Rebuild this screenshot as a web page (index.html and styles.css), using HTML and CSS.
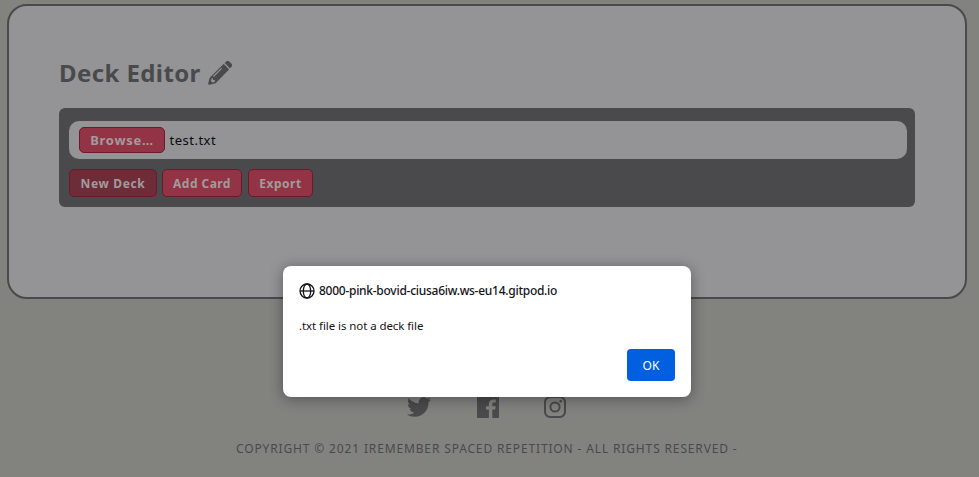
FILE: index.html
```html
<!DOCTYPE html>
<html lang="en">
<head>
<meta charset="utf-8">
<title>Deck Editor</title>
<link rel="stylesheet" href="styles.css">
</head>
<body>
<main class="card">
  <h1 class="title"><span class="title-text">Deck Editor</span>
    <svg class="pencil" viewBox="0 0 24 24"><path fill-rule="evenodd" d="M17.300 1.400 18 .7a2.400 2.400 0 0 1 3.400 0l1.900 1.900a2.400 2.400 0 0 1 0 3.400l-.9.900a.6.600 0 0 1-.8 0l-4.300-4.300a.6.600 0 0 1 0-1.200zM15.300 3.200a.6.600 0 0 1 .8 0l4.700 4.700a.6.600 0 0 1 0 .8L7.700 22.200 1.300 23.700A1 1 0 0 1 .2 22.600L1.700 16.800zM5.800 15.900l8.200-8.200-.8-.8L5 15.100zM3.600 17.500l-.7 2.600 1.500 1.400 2.400-.6v-1.900H5v-1.800z"/></svg>
  </h1>
  <section class="panel">
    <div class="file"><button class="btn browse"><span>Browse…</span></button><span class="filename">test.txt</span></div>
    <div class="actions">
      <button class="btn new active"><span>New Deck</span></button>
      <button class="btn add"><span>Add Card</span></button>
      <button class="btn export"><span>Export</span></button>
    </div>
  </section>
</main>
<footer class="footer">
  <div class="social">
    <svg class="twitter" viewBox="0 0 512 512"><path d="M459.37 151.716c.325 4.548.325 9.097.325 13.645 0 138.72-105.583 298.558-298.558 298.558-59.452 0-114.680-17.219-161.137-47.106 8.447.974 16.568 1.299 25.340 1.299 49.055 0 94.213-16.568 130.274-44.832-46.132-.975-84.792-31.188-98.112-72.772 6.498.974 12.995 1.624 19.818 1.624 9.421 0 18.843-1.300 27.614-3.573-48.081-9.747-84.143-51.980-84.143-102.985v-1.299c13.969 7.797 30.214 12.670 47.431 13.319-28.264-18.843-46.781-51.005-46.781-87.391 0-19.492 5.197-37.360 14.294-52.954 51.655 63.675 129.300 105.258 216.365 109.807-1.624-7.797-2.599-15.918-2.599-24.040 0-57.828 46.782-104.934 104.934-104.934 30.213 0 57.502 12.670 76.670 33.137 23.715-4.548 46.456-13.320 66.599-25.340-7.798 24.366-24.366 44.833-46.132 57.827 21.117-2.273 41.584-8.122 60.426-16.243-14.292 20.791-32.161 39.308-52.628 54.253z"/></svg>
    <svg class="facebook" viewBox="0 0 22 22"><path fill-rule="evenodd" d="M1 0h20a1 1 0 0 1 1 1v20a1 1 0 0 1-1 1h-5.700v-8.400h2.900l.5-3.400h-3.400V8.100c0-1 .4-1.600 1.800-1.600h1.700V3.600a18 18 0 0 0-2.600-.2c-2.700 0-4.300 1.600-4.300 4.300v2.500H9v3.400h2.900V22H1a1 1 0 0 1-1-1V1a1 1 0 0 1 1-1z"/></svg>
    <svg class="instagram" viewBox="0 0 22 22"><rect x="1" y="1" width="20" height="20" rx="5.200"/><circle cx="11" cy="11" r="4.600"/><circle class="dot" cx="16.700" cy="5.300" r="1.300"/></svg>
  </div>
  <p class="copyright"><span>COPYRIGHT © 2021 IREMEMBER SPACED REPETITION - ALL RIGHTS RESERVED -</span></p>
</footer>
<div class="dialog" role="alertdialog">
  <div class="origin">
    <svg class="globe" viewBox="0 0 16 16"><circle cx="8" cy="8" r="7"/><ellipse cx="8" cy="8" rx="3.700" ry="7"/><path d="M1 8h14"/></svg>
    <span class="host">8000-pink-bovid-ciusa6iw.ws-eu14.gitpod.io</span>
  </div>
  <p class="message"><span>.txt file is not a deck file</span></p>
  <button class="ok">OK</button>
</div>
</body>
</html>
```
FILE: styles.css
```css
* { box-sizing: border-box; }
body {
  margin: 0;
  padding: 4px 12px 0 7px;
  height: 477px;
  overflow: hidden;
  background: #82827f;
  color: #4a4a4c;
  font-family: "Noto Sans", "Open Sans", sans-serif;
}
button { font-family: inherit; }
.card {
  height: 295px;
  padding: 50px 50px 0;
  border: 2px solid #4a4a4c;
  border-radius: 20px;
  background: #949496;
}
.title {
  display: flex;
  align-items: center;
  gap: 8px;
  height: 34px;
  margin: 0 0 18px;
  font-size: 24px;
  line-height: 34px;
  white-space: nowrap;
}
.title-text { width: 141px; letter-spacing: 0.4px; }
.pencil { width: 24px; height: 24px; fill: #4a4a4c; }
.panel {
  height: 99px;
  padding: 13px 8px 0 10px;
  border-radius: 6px;
  background: #4a4a4c;
}
.file {
  display: flex;
  align-items: center;
  height: 38px;
  padding: 0 10px;
  border-radius: 10px;
  background: #949496;
}
.filename {
  margin-left: 4.500px;
  color: #0c0c0d;
  font-size: 13px;
  letter-spacing: 0.5px;
}
.btn {
  display: flex;
  align-items: center;
  justify-content: center;
  height: 28px;
  padding: 0;
  border: 1px solid #6c1a2b;
  border-radius: 5px;
  background: #933446;
  color: #a29b9d;
  font-size: 12px;
  font-weight: 700;
  letter-spacing: 0.65px;
  white-space: nowrap;
}
.browse { width: 86px; height: 26px; font-size: 13px; letter-spacing: 0.7px; }
.actions { display: flex; margin-top: 10px; }
.new { width: 88px; }
.add { width: 80px; margin-left: 5px; letter-spacing: 0.45px; }
.export { width: 65px; margin-left: 6px; letter-spacing: 0.5px; }
.active { background: #6e2b38; }
.footer { padding-top: 97px; }
.social {
  display: flex;
  height: 24px;
  padding-left: 400px;
  align-items: flex-start;
}
.social svg { fill: #4a4a4c; }
.twitter { width: 24px; height: 24px; margin-top: -1px; }
.facebook { width: 22px; height: 22px; margin-left: 46px; }
.instagram { width: 22px; height: 22px; margin-left: 45px; }
.social .instagram { fill: none; stroke: #4a4a4c; stroke-width: 2; }
.social .dot { fill: #4a4a4c; stroke: none; }
.copyright {
  margin: 20px 0 0 229px;
  font-size: 12px;
  line-height: 18px;
  letter-spacing: 0.855px;
  white-space: nowrap;
}
.dialog {
  position: absolute;
  left: 283px;
  top: 266px;
  width: 408px;
  height: 131px;
  padding: 16px;
  border-radius: 8px;
  background: #fff;
  box-shadow: 0 2px 14px rgba(12, 12, 13, 0.4);
  color: #15141a;
  font-size: 12px;
}
.origin {
  display: flex;
  align-items: center;
  gap: 4px;
  height: 18px;
  font-weight: 500;
  white-space: nowrap;
}
.host { margin-top: -1px; letter-spacing: -0.27px; }
.globe { width: 16px; height: 16px; margin-top: -1px; fill: none; stroke: #15141a; stroke-width: 1.3; }
.message {
  margin: 17px 0 0;
  font-size: 11.500px;
  line-height: 18px;
  letter-spacing: -0.08px;
}
.ok {
  display: block;
  width: 48px;
  height: 32px;
  margin: 14px 0 0 auto;
  padding: 0;
  border: 0;
  border-radius: 4px;
  background: #0060df;
  color: #fff;
  font-size: 12px;
}
```
